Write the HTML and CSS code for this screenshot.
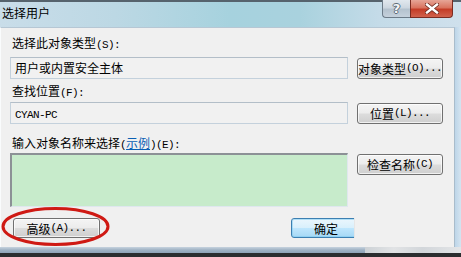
FILE: index.html
```html
<!DOCTYPE html>
<html lang="zh-CN">
<head>
<meta charset="utf-8">
<title>选择用户</title>
<link rel="stylesheet" href="styles.css">
</head>
<body>
<div class="window">
  <div class="titlebar">
    <span class="title">选择用户</span>
    <div class="caption-btns">
      <div class="cap help">?</div>
      <div class="cap close">
        <svg width="14" height="11" viewBox="0 0 14 11">
          <path d="M2 1.5 L12 9.5 M12 1.5 L2 9.5" stroke="#6b2a20" stroke-width="4" stroke-linecap="square" fill="none"/>
          <path d="M2 1.5 L12 9.5 M12 1.5 L2 9.5" stroke="#ffffff" stroke-width="2.4" stroke-linecap="square" fill="none"/>
        </svg>
      </div>
    </div>
  </div>
  <div class="middle">
    <div class="panel">
      <div class="label first">选择此对象类型<span class="a">(S):</span></div>
      <div class="row">
        <div class="field">用户或内置安全主体</div>
        <div class="btn">对象类型<span class="a">(O)...</span></div>
      </div>
      <div class="label second">查找位置<span class="a">(F):</span></div>
      <div class="row second-row">
        <div class="field"><span class="mono">CYAN-PC</span></div>
        <div class="btn">位置<span class="a">(L)...</span></div>
      </div>
      <div class="label third">输入对象名称来选择<span class="a">(</span><span class="link">示例</span><span class="a">)(E):</span></div>
      <div class="row tall">
        <div class="names"></div>
        <div class="btn top">检查名称<span class="a">(C)</span></div>
      </div>
      <div class="bottom-row">
        <div class="btn advanced">高级<span class="a">(A)...</span></div>
        <div class="ok-clip"><div class="btn ok">确定</div></div>
        <svg class="ring" width="110" height="42" viewBox="0 0 110 42">
          <ellipse cx="54.5" cy="20.5" rx="52.5" ry="18" fill="none" stroke="#cf1a14" stroke-width="3"/>
        </svg>
      </div>
    </div>
    <div class="frame-right"></div>
  </div>
  <div class="frame-bottom">
    <div class="band-left"></div>
    <div class="band-right"></div>
  </div>
  <div class="base"></div>
</div>
</body>
</html>
```
FILE: styles.css
```css
* { box-sizing: border-box; }
html, body { margin: 0; padding: 0; }
body {
  width: 461px;
  height: 257px;
  overflow: hidden;
  font-family: "Noto Sans CJK SC", "Noto Sans", sans-serif;
  font-size: 12px;
  color: #000;
}
.window {
  width: 461px;
  height: 257px;
  display: flex;
  flex-direction: column;
  background: #c6dcea;
}
.titlebar {
  height: 27px;
  flex: none;
  display: flex;
  align-items: flex-start;
  border-top: 2px solid #56636d;
  background: linear-gradient(90deg, #c9dde9 0%, #bcd8e4 25%, #a6d2de 50%, #a9d2de 65%, #c4dbe8 82%, #cfe0ec 100%);
  padding-right: 8px;
}
.title {
  margin-left: 2px;
  line-height: 22px;
  font-size: 12px;
}
.caption-btns {
  margin-left: auto;
  display: flex;
  margin-top: -2px;
}
.cap {
  height: 18px;
  display: flex;
  align-items: center;
  justify-content: center;
}
.help {
  width: 28px;
  border: 1px solid #6c7b88;
  border-top: none;
  border-right: none;
  border-radius: 0 0 0 4px;
  background: linear-gradient(#e1e8ee 0%, #cdd7e0 45%, #b4c2ce 55%, #c5d1dc 100%);
  color: #f4f6f8;
  font-family: "DejaVu Sans", sans-serif;
  font-weight: bold;
  font-size: 13px;
  text-shadow: -1px 0 #5d6b77, 1px 0 #5d6b77, 0 -1px #5d6b77, 0 1px #5d6b77;
}
.close {
  width: 43px;
  border: 1px solid #7b2c22;
  border-top: none;
  border-radius: 0 0 4px 0;
  background: linear-gradient(#e6a597 0%, #d9735f 45%, #c43c27 55%, #d1624d 100%);
}
.middle {
  height: 220px;
  flex: none;
  display: flex;
}
.panel {
  width: 455px;
  height: 220px;
  flex: none;
  background: #f0f0f0;
  border-top: 1px solid #b6c7d4;
  border-left: 1px solid #fafcfd;
  border-right: 1px solid #a9bccb;
  padding-left: 9px;
  display: flex;
  flex-direction: column;
  position: relative;
}
.frame-right {
  flex: 1;
  background: linear-gradient(90deg, #bdd5e8, #d4e4f0);
}
.label {
  height: 14px;
  line-height: 14px;
  white-space: nowrap;
}
.label.first { margin-top: 8px; margin-left: 2px; }
.label.second { margin-top: 5px; margin-left: 2px; }
.label.third { margin-top: 12px; margin-left: 2px; }
.a {
  font-family: "Liberation Mono", monospace;
  font-size: 11px;
  letter-spacing: -0.6px;
}
.mono {
  font-family: "Liberation Mono", monospace;
  font-size: 11px;
  letter-spacing: -0.6px;
}
.link {
  color: #0a5fb4;
  text-decoration: underline;
}
.row {
  display: flex;
  align-items: center;
  gap: 9px;
  height: 22px;
  margin-top: 7px;
}
.row.second-row { margin-top: 4px; }
.row.tall {
  height: 54px;
  margin-top: 3px;
  align-items: flex-start;
}
.field {
  width: 338px;
  height: 22px;
  border: 1px solid #c4d1dc;
  border-top-color: #b3bec8;
  background: #f1f1f1;
  padding-left: 4px;
  line-height: 20px;
  white-space: nowrap;
}
.names {
  width: 338px;
  height: 54px;
  background: #c7ebcb;
  border: 1px solid #dfe7ee;
  border-top: 2px solid #8c9196;
  border-left: 2px solid #8c9196;
}
.btn {
  width: 86px;
  height: 21px;
  border: 1px solid #707070;
  border-radius: 3px;
  background: linear-gradient(#f4f4f4 0%, #ececec 48%, #dcdcdc 52%, #cfcfcf 100%);
  box-shadow: inset 0 0 0 1px rgba(255,255,255,0.7);
  display: flex;
  align-items: center;
  justify-content: center;
  white-space: nowrap;
  line-height: 19px;
}
.btn.top { margin-top: 1px; }
.bottom-row {
  margin-top: 11px;
  height: 20px;
  display: flex;
  position: relative;
}
.btn.advanced {
  width: 87px;
  height: 20px;
  margin-left: 3px;
}
.ok-clip {
  margin-left: 191px;
  width: 64px;
  height: 20px;
  overflow: hidden;
  border-right: 1px solid #e6e6e6;
}
.btn.ok {
  width: 70px;
  height: 20px;
  border-color: #3c7fb1;
  background: linear-gradient(#eaf6fd 0%, #d9f0fc 48%, #bee6fd 52%, #a7d9f5 100%);
  box-shadow: inset 0 0 0 1px rgba(120,200,240,0.5);
}
.ring {
  position: absolute;
  left: -9px;
  top: -12px;
}
.frame-bottom {
  height: 6px;
  flex: none;
  display: flex;
}
.band-left {
  width: 365px;
  background: linear-gradient(#c7d3de, #9fb2c4 50%, #8ea3b7);
}
.band-right {
  flex: 1;
  background: linear-gradient(90deg, #cdd2d6, #e1e3e5 30%, #d2d6da 60%, #e3e5e7);
}
.base {
  flex: 1;
  background: #2b2d2f;
}
```
